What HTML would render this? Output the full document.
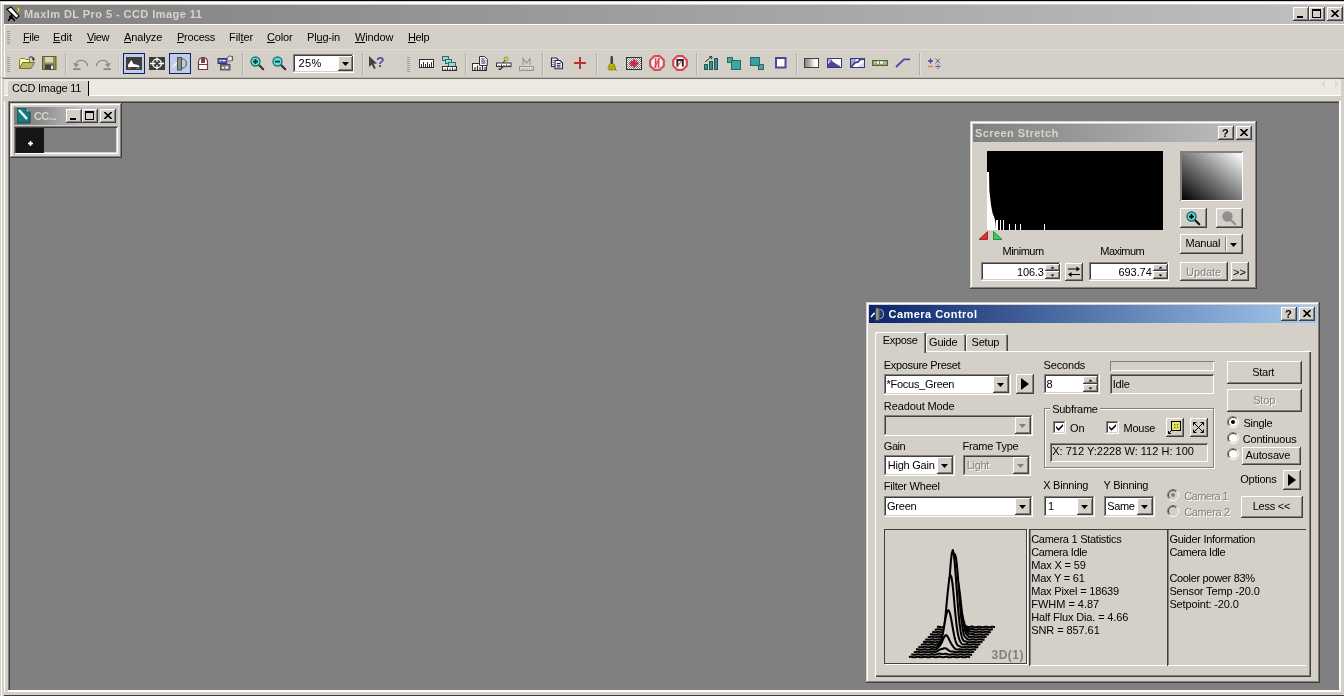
<!DOCTYPE html>
<html><head><meta charset="utf-8"><title>MaxIm DL Pro 5 - CCD Image 11</title>
<style>
html,body{margin:0;padding:0}
body{width:1344px;height:696px;position:relative;overflow:hidden;background:#d4d0c8;font-family:"Liberation Sans",sans-serif;font-size:11px;color:#000}
.a{position:absolute;box-sizing:border-box}
.t{position:absolute;white-space:nowrap}
.r{background:#d4d0c8;box-shadow:inset -1px -1px #404040,inset 1px 1px #fff,inset -2px -2px #808080,inset 2px 2px #d4d0c8}
.s{background:#fff;box-shadow:inset -1px -1px #fff,inset 1px 1px #808080,inset -2px -2px #d4d0c8,inset 2px 2px #404040}
.w{background:#d4d0c8;box-shadow:inset -1px -1px #404040,inset 1px 1px #d4d0c8,inset -2px -2px #808080,inset 2px 2px #fff}
.cb{background:#d4d0c8;box-shadow:inset -1px -1px #404040,inset 1px 1px #fff,inset -2px -2px #808080}
u{text-decoration:underline;text-underline-offset:1px}
#root{position:absolute;left:0;top:0;width:1344px;height:696px;will-change:transform}

</style></head>
<body>
<div id="root">
<div class="a " style="left:0px;top:0px;width:1344px;height:1px;background:#000"></div>
<div class="a " style="left:0px;top:1px;width:1344px;height:1px;background:#d4d0c8"></div>
<div class="a " style="left:0px;top:2px;width:1344px;height:2px;background:#fff"></div>
<div class="a " style="left:0px;top:4px;width:1344px;height:1px;background:#d4d0c8"></div>
<div class="a " style="left:0px;top:1px;width:1px;height:695px;background:#d4d0c8"></div>
<div class="a " style="left:1px;top:2px;width:1px;height:694px;background:#fff"></div>
<div class="a " style="left:2px;top:4px;width:2px;height:692px;background:#d4d0c8"></div>
<div class="a " style="left:4px;top:25px;width:1px;height:667px;background:#fff"></div>
<div class="a " style="left:4px;top:5px;width:1340px;height:19px;background:linear-gradient(90deg,#808080 0%,#c0c0c0 100%)"></div>
<svg class="a" style="left:5px;top:6px" width="18" height="17" viewBox="0 0 18 17">
<path d="M6.5 7 L6.5 13 M6.5 10.5 L3.2 15 M6.5 10.5 L9.6 15 M4 10.6 L7.5 10.6" stroke="#000" stroke-width="1.7" fill="none"/>
<path d="M2 3.3 L6 1 L14 10 L11.5 12.5 Z" fill="#fff" stroke="#000" stroke-width="1.1"/>
<path d="M11.6 1 L13.8 1.4 L14.8 3.6 L13.6 6.2 L11.8 5.8 L13 3.6 Z" fill="#e8e860" stroke="#909018" stroke-width=".8"/>
</svg>
<div id="t1" class="t" style="left:24px;top:9px;font-size:11px;line-height:11px;color:#d8d4cc;font-weight:bold;letter-spacing:0.439px;">MaxIm DL Pro 5 - CCD Image 11</div>
<div class="a cb" style="left:1293px;top:7px;width:16px;height:14px;"></div>
<div class="a " style="left:1297px;top:16px;width:6px;height:2px;background:#000"></div>
<div class="a cb" style="left:1309px;top:7px;width:16px;height:14px;"></div>
<div class="a " style="left:1312px;top:9px;width:9px;height:9px;border:1px solid #000;border-top:2px solid #000"></div>
<div class="a cb" style="left:1327px;top:7px;width:16px;height:14px;"></div>
<svg class="a" style="left:1331px;top:10px" width="8" height="7" viewBox="0 0 8 7"><path d="M0 0 L7 7 M7 0 L0 7" stroke="#000" stroke-width="1.6" transform="translate(.5,0)"/></svg>
<div class="a " style="left:4px;top:24px;width:1340px;height:1px;background:#fff"></div>
<div class="a " style="left:7px;top:31px;width:3px;height:1px;background:#a19d93"></div>
<div class="a " style="left:7px;top:33px;width:3px;height:1px;background:#a19d93"></div>
<div class="a " style="left:7px;top:35px;width:3px;height:1px;background:#a19d93"></div>
<div class="a " style="left:7px;top:37px;width:3px;height:1px;background:#a19d93"></div>
<div class="a " style="left:7px;top:39px;width:3px;height:1px;background:#a19d93"></div>
<div class="a " style="left:7px;top:41px;width:3px;height:1px;background:#a19d93"></div>
<div class="a " style="left:7px;top:43px;width:3px;height:1px;background:#a19d93"></div>
<div id="t2" class="t" style="left:23px;top:32px;font-size:11px;line-height:11px;letter-spacing:-0.388px;"><u>F</u>ile</div>
<div id="t3" class="t" style="left:53px;top:32px;font-size:11px;line-height:11px;letter-spacing:0.058px;"><u>E</u>dit</div>
<div id="t4" class="t" style="left:87px;top:32px;font-size:11px;line-height:11px;letter-spacing:-0.364px;"><u>V</u>iew</div>
<div id="t5" class="t" style="left:124px;top:32px;font-size:11px;line-height:11px;letter-spacing:-0.134px;"><u>A</u>nalyze</div>
<div id="t6" class="t" style="left:177px;top:32px;font-size:11px;line-height:11px;letter-spacing:-0.236px;"><u>P</u>rocess</div>
<div id="t7" class="t" style="left:229px;top:32px;font-size:11px;line-height:11px;letter-spacing:-0.042px;">Fil<u>t</u>er</div>
<div id="t8" class="t" style="left:267px;top:32px;font-size:11px;line-height:11px;letter-spacing:-0.159px;"><u>C</u>olor</div>
<div id="t9" class="t" style="left:307px;top:32px;font-size:11px;line-height:11px;letter-spacing:-0.179px;">Pl<u>u</u>g-in</div>
<div id="t10" class="t" style="left:355px;top:32px;font-size:11px;line-height:11px;letter-spacing:-0.157px;"><u>W</u>indow</div>
<div id="t11" class="t" style="left:408px;top:32px;font-size:11px;line-height:11px;letter-spacing:-0.360px;"><u>H</u>elp</div>
<div class="a " style="left:4px;top:49px;width:1340px;height:1px;background:#dedbd4"></div>
<div class="a " style="left:7px;top:57px;width:3px;height:1px;background:#a19d93"></div>
<div class="a " style="left:7px;top:59px;width:3px;height:1px;background:#a19d93"></div>
<div class="a " style="left:7px;top:61px;width:3px;height:1px;background:#a19d93"></div>
<div class="a " style="left:7px;top:63px;width:3px;height:1px;background:#a19d93"></div>
<div class="a " style="left:7px;top:65px;width:3px;height:1px;background:#a19d93"></div>
<div class="a " style="left:7px;top:67px;width:3px;height:1px;background:#a19d93"></div>
<div class="a " style="left:7px;top:69px;width:3px;height:1px;background:#a19d93"></div>
<div class="a " style="left:7px;top:71px;width:3px;height:1px;background:#a19d93"></div>
<div class="a " style="left:407px;top:57px;width:3px;height:1px;background:#a19d93"></div>
<div class="a " style="left:407px;top:59px;width:3px;height:1px;background:#a19d93"></div>
<div class="a " style="left:407px;top:61px;width:3px;height:1px;background:#a19d93"></div>
<div class="a " style="left:407px;top:63px;width:3px;height:1px;background:#a19d93"></div>
<div class="a " style="left:407px;top:65px;width:3px;height:1px;background:#a19d93"></div>
<div class="a " style="left:407px;top:67px;width:3px;height:1px;background:#a19d93"></div>
<div class="a " style="left:407px;top:69px;width:3px;height:1px;background:#a19d93"></div>
<div class="a " style="left:407px;top:71px;width:3px;height:1px;background:#a19d93"></div>
<div class="a " style="left:65px;top:53px;width:1px;height:22px;background:#b4b0a7"></div>
<div class="a " style="left:66px;top:53px;width:1px;height:22px;background:#e2dfd9"></div>
<div class="a " style="left:242px;top:53px;width:1px;height:22px;background:#b4b0a7"></div>
<div class="a " style="left:243px;top:53px;width:1px;height:22px;background:#e2dfd9"></div>
<div class="a " style="left:362px;top:53px;width:1px;height:22px;background:#b4b0a7"></div>
<div class="a " style="left:363px;top:53px;width:1px;height:22px;background:#e2dfd9"></div>
<div class="a " style="left:465px;top:53px;width:1px;height:22px;background:#b4b0a7"></div>
<div class="a " style="left:466px;top:53px;width:1px;height:22px;background:#e2dfd9"></div>
<div class="a " style="left:542px;top:53px;width:1px;height:22px;background:#b4b0a7"></div>
<div class="a " style="left:543px;top:53px;width:1px;height:22px;background:#e2dfd9"></div>
<div class="a " style="left:596px;top:53px;width:1px;height:22px;background:#b4b0a7"></div>
<div class="a " style="left:597px;top:53px;width:1px;height:22px;background:#e2dfd9"></div>
<div class="a " style="left:696px;top:53px;width:1px;height:22px;background:#b4b0a7"></div>
<div class="a " style="left:697px;top:53px;width:1px;height:22px;background:#e2dfd9"></div>
<div class="a " style="left:796px;top:53px;width:1px;height:22px;background:#b4b0a7"></div>
<div class="a " style="left:797px;top:53px;width:1px;height:22px;background:#e2dfd9"></div>
<div class="a " style="left:919px;top:53px;width:1px;height:22px;background:#b4b0a7"></div>
<div class="a " style="left:920px;top:53px;width:1px;height:22px;background:#e2dfd9"></div>
<div class="a " style="left:118px;top:53px;width:1px;height:22px;background:#cbc7be"></div>
<div class="a " style="left:119px;top:53px;width:1px;height:22px;background:#dedbd4"></div>
<div class="a " style="left:123px;top:53px;width:22px;height:21px;background:#c2cce6;border:1px solid #0a246a"></div>
<div class="a " style="left:169px;top:53px;width:22px;height:21px;background:#c2cce6;border:1px solid #0a246a"></div>
<div class="a s" style="left:293px;top:54px;width:61px;height:19px;"></div>
<div id="t12" class="t" style="left:298.5px;top:58px;font-size:11px;line-height:11px;color:#000;letter-spacing:0.323px;">25%</div>
<div class="a cb" style="left:338px;top:56px;width:15px;height:15px;"></div>
<svg class="a" style="left:342px;top:62px" width="7" height="4" viewBox="0 0 7 4"><path d="M0 0 L7 0 L3.5 4 Z" fill="#000"/></svg>
<div class="a " style="left:0px;top:77px;width:1344px;height:1px;background:#bdb9b0"></div>
<div class="a " style="left:3px;top:78px;width:1341px;height:1px;background:#6e6b64"></div>
<div class="a " style="left:4px;top:79px;width:1340px;height:17px;background:#ece9e3"></div>
<div class="a " style="left:4px;top:95px;width:1340px;height:1px;background:#fff"></div>
<div class="a " style="left:8px;top:81px;width:80px;height:15px;background:#d4d0c8"></div>
<div class="a " style="left:88px;top:81px;width:1px;height:15px;background:#000"></div>
<div id="t13" class="t" style="left:12px;top:83px;font-size:11px;line-height:11px;color:#000;letter-spacing:-0.228px;">CCD Image 11</div>
<svg class="a" style="left:1320px;top:80px" width="20" height="10" viewBox="0 0 20 10"><path d="M1 4 L5 0 L5 8 Z M19 4 L15 0 L15 8 Z" fill="#dcd9d2"/></svg>
<div class="a " style="left:4px;top:96px;width:1340px;height:5px;background:#d4d0c8"></div>
<div class="a " style="left:8px;top:101px;width:1331px;height:589px;background:#808080;box-shadow:inset 1px 1px #808080,inset 2px 2px #404040"></div>
<div class="a " style="left:1339px;top:101px;width:2px;height:591px;background:#fff"></div>
<div class="a " style="left:1341px;top:79px;width:3px;height:617px;background:#d4d0c8"></div>
<div class="a " style="left:8px;top:690px;width:1333px;height:2px;background:#fff"></div>
<div class="a " style="left:4px;top:692px;width:1340px;height:3px;background:#d4d0c8"></div>
<div class="a " style="left:4px;top:695px;width:1340px;height:1px;background:#404040"></div>
<div class="a w" style="left:10px;top:103px;width:112px;height:55px;"></div>
<div class="a " style="left:14px;top:107px;width:104px;height:18px;background:linear-gradient(90deg,#808080 0%,#8c8c8c 25%,#c0c0c0 65%,#c0c0c0 100%)"></div>
<svg class="a" style="left:17px;top:108px" width="14" height="16" viewBox="0 0 14 16">
<path d="M0 0 L9 0 L13 4 L13 15 L0 15 Z" fill="#1a7a80" stroke="#0a4a50" stroke-width="1"/>
<path d="M9 0 L9 4 L13 4" fill="#7fd0d0" stroke="#0a4a50" stroke-width=".8"/>
<path d="M2 2 L10 11" stroke="#e8ffff" stroke-width="2.4"/>
</svg>
<div id="t14" class="t" style="left:34px;top:111px;font-size:11px;line-height:11px;color:#d8d4cc;font-weight:bold;letter-spacing:-0.573px;">CC...</div>
<div class="a cb" style="left:66px;top:109px;width:16px;height:14px;"></div>
<div class="a " style="left:70px;top:118px;width:6px;height:2px;background:#000"></div>
<div class="a cb" style="left:82px;top:109px;width:16px;height:14px;"></div>
<div class="a " style="left:85px;top:111px;width:9px;height:9px;border:1px solid #000;border-top:2px solid #000"></div>
<div class="a cb" style="left:100px;top:109px;width:16px;height:14px;"></div>
<svg class="a" style="left:104px;top:112px" width="8" height="7" viewBox="0 0 8 7"><path d="M0 0 L7 7 M7 0 L0 7" stroke="#000" stroke-width="1.6" transform="translate(.5,0)"/></svg>
<div class="a " style="left:14px;top:126px;width:104px;height:28px;background:#808080;box-shadow:inset 1px 1px #808080,inset -1px -1px #fff,inset 2px 2px #404040,inset -2px -2px #d4d0c8"></div>
<div class="a " style="left:16px;top:128px;width:28px;height:25px;background:#161616"></div>
<svg class="a" style="left:28px;top:141px" width="5" height="5" viewBox="0 0 5 5"><path d="M2.5 0 L2.5 5 M0 2.5 L5 2.5" stroke="#fff" stroke-width="1.4"/><rect x="1.2" y="1.2" width="2.6" height="2.6" fill="#fff"/></svg>
<svg class="a" style="left:19px;top:55px" width="17" height="15" viewBox="0 0 17 15">
<path d="M10 3.5 C11 1,14 1,14.5 4" fill="none" stroke="#303030" stroke-width="1.1"/>
<path d="M12.6 3.2 L16 3.4 L14.6 6.4 Z" fill="#303030"/>
<path d="M0.5 13.5 L0.5 4.5 L1.5 3.5 L5.5 3.5 L6.5 4.5 L10.5 4.5 L10.5 7.5" fill="#ffffa0" stroke="#808040" stroke-width="1"/>
<path d="M0.5 13.5 L3.5 7.5 L15.5 7.5 L12 13.5 Z" fill="#b8b860" stroke="#707030" stroke-width="1"/>
</svg>
<svg class="a" style="left:42px;top:56px" width="15" height="14" viewBox="0 0 15 14">
<rect x=".5" y=".5" width="13.5" height="13" fill="#909048" stroke="#606028" stroke-width="1"/>
<rect x="3" y="1" width="8" height="5.5" fill="#d8d4c0"/>
<rect x="3" y="8.5" width="8.5" height="5" fill="#404040"/>
<rect x="9" y="9.5" width="2" height="3.5" fill="#e8e8d0"/>
</svg>
<svg class="a" style="left:72px;top:57px" width="17" height="14" viewBox="0 0 17 14">
<path d="M3.5 8.5 C3.5 1.5,15.5 1.5,15.5 9.5" fill="none" stroke="#8c8a84" stroke-width="1.2"/>
<path d="M1 6 L4 10.5 L7 7 Z" fill="#8c8a84"/>
<rect x="1" y="11.2" width="7.5" height="1.8" fill="#8c8a84"/>
</svg>
<svg class="a" style="left:95px;top:57px" width="17" height="14" viewBox="0 0 17 14">
<path d="M1.5 9.5 C1.5 1.5,13.5 1.5,13.5 8.5" fill="none" stroke="#8c8a84" stroke-width="1.2"/>
<path d="M16 6 L13 10.5 L10 7 Z" fill="#8c8a84"/>
<rect x="8.5" y="11.2" width="7.5" height="1.8" fill="#8c8a84"/>
</svg>
<svg class="a" style="left:126px;top:57px" width="16" height="13" viewBox="0 0 16 13">
<rect width="16" height="13" fill="#3c3c3c"/>
<path d="M2 10 L2 8 L4 5 L5.2 3 L6.5 5 L7.5 7 L10 7.6 L12 8 L13.5 9 L13.5 10 Z" fill="#fff"/>
<rect x="2" y="10.5" width="3" height="1.2" fill="#e04040"/>
<rect x="10.5" y="10.5" width="3" height="1.2" fill="#40c040"/>
</svg>
<svg class="a" style="left:149px;top:57px" width="16" height="13" viewBox="0 0 16 13">
<rect width="16" height="13" fill="#3c3c3c"/>
<circle cx="8" cy="6.5" r="4.3" fill="none" stroke="#fff" stroke-width="1.3"/>
<path d="M8 0.5 L8 5 M8 8 L8 12.5 M1 6.5 L6.5 6.5 M9.5 6.5 L15 6.5" stroke="#fff" stroke-width="1.3"/>
</svg>
<svg class="a" style="left:172px;top:56px" width="16" height="15" viewBox="0 0 16 15">
<path d="M1 11 L4 7.5 L6 7.5" fill="none" stroke="#f4f4f4" stroke-width="1.4"/>
<path d="M9 3 L11 3 C15.5 3,15.5 12,11 12 L9 12 Z" fill="#b4d4d0" stroke="#2c5858" stroke-width="1"/>
<rect x="5.5" y="1.5" width="4" height="12.5" fill="#8c8c8c" stroke="#505050" stroke-width="1"/>
</svg>
<svg class="a" style="left:197px;top:56px" width="12" height="15" viewBox="0 0 12 15">
<path d="M1.5 13.5 L1.5 6 C1.5 0,10.5 0,10.5 6 L10.5 13.5 Z" fill="#fff" stroke="#703838" stroke-width="1.2"/>
<path d="M4 7 L4 2.2 C5 1.2,7 1.2,8 2.2 L8 7 Z" fill="#804040"/>
<path d="M1.5 8.5 L10.5 8.5" stroke="#703838" stroke-width="1"/>
</svg>
<svg class="a" style="left:217px;top:55px" width="18" height="16" viewBox="0 0 18 16">
<rect x="1" y="3.5" width="9" height="5" fill="#5858a8" stroke="#38386c" stroke-width="1"/>
<rect x="2.5" y="5" width="2" height="1.2" fill="#fff"/><rect x="5.5" y="5" width="3" height="1.2" fill="#fff"/>
<rect x="3.5" y="9.5" width="9.5" height="5.5" fill="#888088" stroke="#585058" stroke-width="1"/>
<rect x="5" y="12" width="2" height="1.4" fill="#fff"/><rect x="8.5" y="11.5" width="2.5" height="2" fill="#fff"/>
<circle cx="13" cy="3.5" r="2.6" fill="#e8e8e8" stroke="#606068" stroke-width="1"/>
<path d="M9 9 L12 5.5 M15.5 1 L15.5 6" stroke="#606068" stroke-width="1.1"/>
<rect x="10" y="5" width="3" height="3" fill="#a8a8c8" opacity=".8"/>
</svg>
<svg class="a" style="left:250px;top:56px" width="15" height="15" viewBox="0 0 15 15"><path d="M8.5 8.5 L13.2 13.2" stroke="#3c3030" stroke-width="2.2" stroke-linecap="round"/><circle cx="5.5" cy="5.5" r="4.5" fill="#5fe0e0" stroke="#207878" stroke-width="1.4"/><rect x="3" y="4.7" width="5" height="1.8" fill="#103838"/><rect x="4.6" y="3" width="1.8" height="5" fill="#103838"/></svg>
<svg class="a" style="left:272px;top:56px" width="15" height="15" viewBox="0 0 15 15"><path d="M8.5 8.5 L13.2 13.2" stroke="#3c3030" stroke-width="2.2" stroke-linecap="round"/><circle cx="5.5" cy="5.5" r="4.5" fill="#5fe0e0" stroke="#207878" stroke-width="1.4"/><rect x="3" y="4.7" width="5" height="1.8" fill="#103838"/></svg>
<svg class="a" style="left:368px;top:55px" width="18" height="16" viewBox="0 0 18 16">
<path d="M1 1 L1 12 L3.8 9.4 L6 14 L7.8 13.2 L5.6 8.8 L9 8.6 Z" fill="#404040"/>
<text x="8" y="11.5" font-family="Liberation Sans, sans-serif" font-weight="bold" font-size="14" fill="#5a4aa0">?</text>
</svg>
<svg class="a" style="left:419px;top:59px" width="15" height="9" viewBox="0 0 15 9"><rect x=".5" y=".5" width="14" height="8" fill="#fff" stroke="#303030" stroke-width="1"/><rect x="2.0" y="5" width="1" height="3" fill="#303030"/><rect x="4.0" y="3" width="1" height="5" fill="#303030"/><rect x="6.0" y="5" width="1" height="3" fill="#303030"/><rect x="8.0" y="3" width="1" height="5" fill="#303030"/><rect x="10.0" y="5" width="1" height="3" fill="#303030"/><rect x="12.0" y="3" width="1" height="5" fill="#303030"/></svg>
<svg class="a" style="left:442px;top:56px" width="16" height="15" viewBox="0 0 16 15">
<rect x=".5" y=".5" width="6" height="4" fill="#9fd8d0" stroke="#287068" stroke-width="1"/>
<rect x="3.5" y="3.5" width="6" height="4" fill="#9fd8d0" stroke="#287068" stroke-width="1"/>
<rect x="6.5" y="6.5" width="7" height="4" fill="#9fd8d0" stroke="#287068" stroke-width="1"/>
<rect x=".5" y="10.5" width="14" height="4" fill="#fff" stroke="#303030" stroke-width="1"/>
<path d="M3 12.5 L3 14 M5.5 11.5 L5.5 14 M8 12.5 L8 14 M10.5 11.5 L10.5 14 M13 12.5 L13 14" stroke="#303030" stroke-width="1"/>
</svg>
<svg class="a" style="left:472px;top:56px" width="16" height="15" viewBox="0 0 16 15">
<rect x=".5" y="7.5" width="14" height="7" fill="#fff" stroke="#303030" stroke-width="1"/>
<path d="M3 11 L3 14 M5.5 9.5 L5.5 14 M8 11 L8 14 M10.5 9.5 L10.5 14 M13 11 L13 14" stroke="#303030" stroke-width="1.2"/>
<path d="M7.5 .5 L12.5 .5 L15.3 3.2 L15.3 9.5 L7.5 9.5 Z" fill="#f4f4ff" stroke="#303048" stroke-width="1"/>
<path d="M9.3 3 L12.5 3 M9.3 5 L13.5 5 M9.3 7 L13.5 7" stroke="#303048" stroke-width="1"/>
</svg>
<svg class="a" style="left:496px;top:56px" width="16" height="15" viewBox="0 0 16 15">
<circle cx="10" cy="3" r="1.8" fill="none" stroke="#a8a020" stroke-width="1.2"/>
<path d="M9 4.5 L6 8" stroke="#404040" stroke-width="1.1"/>
<rect x=".5" y="7" width="14.5" height="3.6" fill="#fff" stroke="#303030" stroke-width="1"/>
<path d="M3 9 L3 10.5 M5.5 8.5 L5.5 10.5 M8 9 L8 10.5 M10.5 8.5 L10.5 10.5 M13 9 L13 10.5" stroke="#303030" stroke-width="1"/>
<path d="M7 10.8 L4 13.5 L2.5 12.8" fill="none" stroke="#303030" stroke-width="1.3"/>
</svg>
<svg class="a" style="left:519px;top:57px" width="16" height="15" viewBox="0 0 16 15">
<path d="M4 8 L4 1.5 L7.5 6 L11 1.5 L11 8" fill="none" stroke="#9a968e" stroke-width="1.1"/>
<rect x=".5" y="9.5" width="14" height="4" fill="#e0ddd6" stroke="#9a968e" stroke-width="1"/>
<path d="M3 11.5 L3 13 M5.5 11.5 L5.5 13 M8 11.5 L8 13 M10.5 11.5 L10.5 13 M13 11.5 L13 13" stroke="#9a968e" stroke-width="1"/>
</svg>
<svg class="a" style="left:550px;top:57px" width="15" height="13" viewBox="0 0 15 13">
<path d="M1.5 1 L6.5 1 L8 2.5 L8 9.5 L1.5 9.5 Z" fill="#f0f0ff" stroke="#282848" stroke-width="1.1"/>
<path d="M5 3.5 L10 3.5 L12.5 6 L12.5 11.8 L5 11.8 Z" fill="#f0f0ff" stroke="#282848" stroke-width="1.1"/>
<path d="M6.8 6.5 L10.5 6.5 M6.8 8.3 L10.5 8.3 M6.8 10 L10.5 10" stroke="#282848" stroke-width="1"/>
<path d="M2.6 3.5 L3.6 3.5 M2.6 5.5 L3.6 5.5 M2.6 7.5 L3.6 7.5" stroke="#282848" stroke-width="1"/>
</svg>
<svg class="a" style="left:574px;top:57px" width="12" height="12" viewBox="0 0 12 12"><path d="M6 0 L6 12 M0 6 L12 6" stroke="#b83030" stroke-width="2"/></svg>
<svg class="a" style="left:606px;top:56px" width="12" height="15" viewBox="0 0 12 15">
<path d="M5 0 L6.5 0 L7 1.5 L7 8 L4.5 8 L4.5 1.5 Z" fill="#404040"/>
<path d="M3.5 8 L8 8 L9.5 12 L8.5 14 L3 14 L2 12 Z" fill="#e8e020" stroke="#808000" stroke-width=".8"/>
<path d="M4 9 L4 14 M6 9 L6 14 M8 9 L8 13" stroke="#606000" stroke-width=".8"/>
<path d="M9 13 L10.5 14.5" stroke="#404040" stroke-width="1"/>
</svg>
<svg class="a" style="left:626px;top:57px" width="16" height="13" viewBox="0 0 16 13">
<defs><pattern id="dots" width="2" height="2" patternUnits="userSpaceOnUse"><rect width="1" height="1" fill="#585858"/><rect x="1" y="1" width="1" height="1" fill="#585858"/></pattern></defs>
<rect x=".5" y=".5" width="15" height="12" fill="#fff" stroke="#303030" stroke-width="1"/>
<rect x="1" y="1" width="14" height="11" fill="url(#dots)" opacity=".75"/>
<path d="M8 2.5 L8 10.5 M3.5 6.5 L12.5 6.5" stroke="#c03048" stroke-width="2.4"/>
<path d="M5 3.8 L11 9.2 M11 3.8 L5 9.2" stroke="#c03048" stroke-width="1.2"/>
</svg>
<svg class="a" style="left:649px;top:55px" width="16" height="16" viewBox="0 0 16 16"><path d="M5.2 1.2 L10.8 1.2 L14.8 5.2 L14.8 10.8 L10.8 14.8 L5.2 14.8 L1.2 10.8 L1.2 5.2 Z" fill="#fff" stroke="#d84858" stroke-width="2.2" stroke-linejoin="round"/><path d="M6.6 3 L6.6 13 M9.6 3 L9.6 13" stroke="#d84858" stroke-width="1.7"/><path d="M10.5 3.5 L5.5 12.5" stroke="#d84858" stroke-width="1.3"/></svg>
<svg class="a" style="left:672px;top:55px" width="16" height="16" viewBox="0 0 16 16"><path d="M5.2 1.2 L10.8 1.2 L14.8 5.2 L14.8 10.8 L10.8 14.8 L5.2 14.8 L1.2 10.8 L1.2 5.2 Z" fill="#fff" stroke="#d84858" stroke-width="2.2" stroke-linejoin="round"/><path d="M5.4 11.6 L5.4 5 L10.8 5 L10.8 11.6" fill="none" stroke="#302828" stroke-width="2"/><path d="M5 12 L9.5 6" stroke="#d84858" stroke-width="1.1"/></svg>
<svg class="a" style="left:704px;top:56px" width="15" height="14" viewBox="0 0 15 14">
<rect x=".5" y="8.5" width="3" height="5" fill="#3a9090" stroke="#205858" stroke-width="1"/>
<rect x="5.5" y="5.5" width="3" height="8" fill="#3a9090" stroke="#205858" stroke-width="1"/>
<rect x="10.5" y="2.5" width="3" height="11" fill="#3a9090" stroke="#205858" stroke-width="1"/>
<path d="M1 6 L7.5 .8 M5 .8 L8 .6 L7.6 3.2" fill="none" stroke="#303030" stroke-width="1"/>
</svg>
<svg class="a" style="left:727px;top:57px" width="15" height="13" viewBox="0 0 15 13">
<rect x=".5" y=".5" width="5" height="5" fill="#4aa8a0" stroke="#286860" stroke-width="1"/>
<rect x="4.5" y="3.5" width="9" height="9" fill="#38a8a8" stroke="#286860" stroke-width="1"/>
</svg>
<svg class="a" style="left:750px;top:57px" width="15" height="13" viewBox="0 0 15 13">
<rect x="8.5" y="7.5" width="5" height="5" fill="#5a9c98" stroke="#286860" stroke-width="1"/>
<rect x=".5" y=".5" width="9" height="8" fill="#38a0a0" stroke="#286860" stroke-width="1"/>
</svg>
<svg class="a" style="left:775px;top:57px" width="12" height="12" viewBox="0 0 12 12"><rect x="1" y="1" width="9.5" height="9.5" fill="#fff" stroke="#484898" stroke-width="2"/></svg>
<svg class="a" style="left:804px;top:58px" width="15" height="10" viewBox="0 0 15 10">
<defs><linearGradient id="gA" x1="0" x2="1"><stop offset="0" stop-color="#808080"/><stop offset=".35" stop-color="#b0b0b0"/><stop offset=".7" stop-color="#f4f4f4"/><stop offset="1" stop-color="#fff"/></linearGradient></defs>
<rect x=".5" y=".5" width="14" height="9" fill="url(#gA)" stroke="#404040" stroke-width="1"/>
</svg>
<svg class="a" style="left:827px;top:58px" width="15" height="10" viewBox="0 0 15 10">
<rect x=".5" y=".5" width="14" height="9" fill="#fff" stroke="#383878" stroke-width="1"/>
<path d="M1 9 L1 6 L3 4 L4.5 1.5 L6 4 L8 5 L10 6.5 L13 8 L13 9 Z" fill="#484898"/>
<rect x="1" y="1" width="3" height="3" fill="#a8a8c8"/>
</svg>
<svg class="a" style="left:850px;top:58px" width="15" height="10" viewBox="0 0 15 10">
<rect x=".5" y=".5" width="14" height="9" fill="#fff" stroke="#383878" stroke-width="1"/>
<path d="M1 1 L7 1 L1 7 Z" fill="#a8a8c8"/>
<path d="M1 9 L5 4.5 L8 4 L10 1.5 L14 1" fill="none" stroke="#484898" stroke-width="2"/>
<path d="M7 9 L14 9 L14 4 Z" fill="#d8d8e8"/>
</svg>
<svg class="a" style="left:872px;top:60px" width="16" height="6" viewBox="0 0 16 6">
<rect x=".5" y=".5" width="15" height="5" fill="#88a870" stroke="#506838" stroke-width="1"/>
<rect x="5" y="1.5" width="6" height="2.2" fill="#fff"/>
<rect x="7" y="1.5" width="1" height="2.2" fill="#506838"/>
<rect x="2" y="2" width="2" height="1.2" fill="#d0e0c0"/><rect x="12" y="2" width="2" height="1.2" fill="#d0e0c0"/>
</svg>
<svg class="a" style="left:895px;top:58px" width="16" height="10" viewBox="0 0 16 10"><path d="M1 9 L9 1.4 L15 1.4" fill="none" stroke="#4848a8" stroke-width="1.8"/></svg>
<svg class="a" style="left:927px;top:57px" width="15" height="13" viewBox="0 0 15 13">
<path d="M1 4 L6 4 M3.5 1.5 L3.5 6.5" stroke="#4040b0" stroke-width="1.3"/>
<path d="M8.5 1.5 L13 6.5 M13 1.5 L8.5 6.5" stroke="#606068" stroke-width="1"/>
<path d="M1 9.5 L6 9.5" stroke="#e08050" stroke-width="1.4"/>
<path d="M8.5 9.5 L13.5 9.5" stroke="#606090" stroke-width="1.2"/>
<rect x="10.4" y="7.3" width="1.2" height="1.2" fill="#606090"/><rect x="10.4" y="10.8" width="1.2" height="1.2" fill="#606090"/>
</svg>
<div class="a w" style="left:970px;top:121px;width:287px;height:168px;"></div>
<div class="a " style="left:973px;top:124px;width:281px;height:18px;background:linear-gradient(90deg,#808080 0%,#c0c0c0 100%)"></div>
<div id="t15" class="t" style="left:975px;top:128px;font-size:11px;line-height:11px;color:#d8d4cc;font-weight:bold;letter-spacing:0.425px;">Screen Stretch</div>
<div class="a cb" style="left:1218px;top:126px;width:16px;height:14px;"></div>
<div id="t16" class="t" style="left:1222px;top:128px;font-size:11px;line-height:11px;color:#000;font-weight:bold;">?</div>
<div class="a cb" style="left:1236px;top:126px;width:16px;height:14px;"></div>
<svg class="a" style="left:1240px;top:129px" width="8" height="7" viewBox="0 0 8 7"><path d="M0 0 L7 7 M7 0 L0 7" stroke="#000" stroke-width="1.6" transform="translate(.5,0)"/></svg>
<div class="a " style="left:987px;top:151px;width:176px;height:79px;background:#000"></div>
<svg class="a" style="left:987px;top:151px" width="176" height="79" viewBox="0 0 176 79"><path d="M0 79 L0 21 L2 21 L2.4 40 L4 54 L5.5 62 L7.5 67 L8.5 72 L9 79 Z" fill="#fff"/><rect x="9" y="69" width="2" height="10" fill="#fff"/><rect x="13" y="69" width="1" height="10" fill="#fff"/><rect x="16" y="69" width="1" height="10" fill="#fff"/><rect x="22" y="73" width="1" height="6" fill="#fff"/><rect x="28" y="73" width="1" height="6" fill="#fff"/><rect x="33" y="73" width="1" height="6" fill="#fff"/><rect x="57" y="73" width="1" height="6" fill="#fff"/></svg>
<svg class="a" style="left:978px;top:231px" width="26" height="10" viewBox="0 0 26 10"><path d="M9.5 0.5 L9.5 8.5 L1 8.5 Z" fill="#e03030" stroke="#802020" stroke-width=".8"/><path d="M15.5 0.5 L15.5 8.5 L24 8.5 Z" fill="#30d050" stroke="#207030" stroke-width=".8"/></svg>
<div class="a " style="left:1180px;top:151px;width:63px;height:50px;background:#fff;box-shadow:inset 1px 1px #808080,inset -1px -1px #fff,inset 2px 2px #808080"></div>
<div class="a " style="left:1182px;top:153px;width:60px;height:47px;background:linear-gradient(to top right,#000 0%,#7c7c7c 50%,#fff 100%)"></div>
<div class="a r" style="left:1180px;top:208px;width:27px;height:20px;"></div>
<svg class="a" style="left:1186px;top:211px" width="15" height="15" viewBox="0 0 15 15"><path d="M8.5 8.5 L13.2 13.2" stroke="#101010" stroke-width="2.2" stroke-linecap="round"/><circle cx="5.5" cy="5.5" r="4.5" fill="#60e0e0" stroke="#186868" stroke-width="1.4"/><rect x="3" y="4.7" width="5" height="1.8" fill="#000"/><rect x="4.6" y="3" width="1.8" height="5" fill="#000"/></svg>
<div class="a r" style="left:1216px;top:208px;width:27px;height:20px;"></div>
<svg class="a" style="left:1222px;top:211px" width="15" height="15" viewBox="0 0 15 15"><path d="M8.5 8.5 L13.2 13.2" stroke="#909090" stroke-width="2.2" stroke-linecap="round"/><circle cx="5.5" cy="5.5" r="4.5" fill="#909090" stroke="#909090" stroke-width="1.4"/><rect x="3" y="4.7" width="5" height="1.8" fill="#909090"/></svg>
<div class="a r" style="left:1180px;top:234px;width:63px;height:20px;"></div>
<div id="t17" class="t" style="left:1185.5px;top:238px;font-size:11px;line-height:11px;color:#000;letter-spacing:-0.230px;">Manual</div>
<div class="a " style="left:1225px;top:237px;width:1px;height:14px;background:#808080"></div>
<div class="a " style="left:1226px;top:237px;width:1px;height:14px;background:#fff"></div>
<svg class="a" style="left:1230px;top:243px" width="7" height="4" viewBox="0 0 7 4"><path d="M0 0 L7 0 L3.5 4 Z" fill="#000"/></svg>
<div id="t18" class="t" style="left:1002.5px;top:246px;font-size:11px;line-height:11px;color:#000;letter-spacing:-0.504px;">Minimum</div>
<div id="t19" class="t" style="left:1100.3px;top:246px;font-size:11px;line-height:11px;color:#000;letter-spacing:-0.539px;">Maximum</div>
<div class="a s" style="left:981px;top:262px;width:80px;height:19px;"></div>
<div id="t20" class="t" style="left:1017px;top:267px;font-size:11px;line-height:11px;color:#000;letter-spacing:-0.166px;">106.3</div>
<div class="a cb" style="left:1045px;top:264px;width:15px;height:7px;"></div>
<div class="a cb" style="left:1045px;top:271px;width:15px;height:8px;"></div>
<svg class="a" style="left:1050px;top:266px" width="5" height="3" viewBox="0 0 5 3"><path d="M0.5 2.6 L4.5 2.6 L2.5 0.4 Z" fill="#000"/></svg>
<svg class="a" style="left:1050px;top:274px" width="5" height="3" viewBox="0 0 5 3"><path d="M0.5 0.4 L4.5 0.4 L2.5 2.6 Z" fill="#000"/></svg>
<div class="a r" style="left:1065px;top:263px;width:18px;height:18px;"></div>
<svg class="a" style="left:1068px;top:266px" width="12" height="12" viewBox="0 0 12 12"><path d="M0 3 L10 3 M12 8.5 L2 8.5" fill="none" stroke="#000" stroke-width="1.1"/><path d="M8.5 .5 L12 3 L8.5 5.5 Z M3.5 6 L0 8.5 L3.5 11 Z" fill="#000"/></svg>
<div class="a s" style="left:1089px;top:262px;width:80px;height:19px;"></div>
<div id="t21" class="t" style="left:1118.5px;top:267px;font-size:11px;line-height:11px;color:#000;letter-spacing:-0.076px;">693.74</div>
<div class="a cb" style="left:1153px;top:264px;width:15px;height:7px;"></div>
<div class="a cb" style="left:1153px;top:271px;width:15px;height:8px;"></div>
<svg class="a" style="left:1158px;top:266px" width="5" height="3" viewBox="0 0 5 3"><path d="M0.5 2.6 L4.5 2.6 L2.5 0.4 Z" fill="#000"/></svg>
<svg class="a" style="left:1158px;top:274px" width="5" height="3" viewBox="0 0 5 3"><path d="M0.5 0.4 L4.5 0.4 L2.5 2.6 Z" fill="#000"/></svg>
<div class="a r" style="left:1180px;top:262px;width:48px;height:19px;"></div>
<div id="t22" class="t" style="left:1186px;top:267px;font-size:11px;line-height:11px;color:#808080;text-shadow:1px 1px 0 #fff;letter-spacing:-0.047px;">Update</div>
<div class="a r" style="left:1231px;top:262px;width:18px;height:19px;"></div>
<div id="t23" class="t" style="left:1233px;top:267px;font-size:11px;line-height:11px;color:#000;letter-spacing:0.170px;">&gt;&gt;</div>
<div class="a w" style="left:866px;top:302px;width:454px;height:381px;"></div>
<div class="a " style="left:869px;top:305px;width:448px;height:18px;background:linear-gradient(90deg,#0a246a 0%,#a6caf0 100%)"></div>
<svg class="a" style="left:870px;top:307px" width="15" height="15" viewBox="0 0 15 15">
<path d="M1 10 L4 6.5 L6 6.5" fill="none" stroke="#fff" stroke-width="1.4"/>
<path d="M9 2.5 L10.5 2.5 C14.5 2.5,14.5 11.5,10.5 11.5 L9 11.5 Z" fill="#26386c" stroke="#a8bcd8" stroke-width="1"/>
<rect x="5.5" y="1" width="3.6" height="12.5" fill="#909090" stroke="#404040" stroke-width="1"/>
</svg>
<div id="t24" class="t" style="left:888.5px;top:309px;font-size:11px;line-height:11px;color:#fff;font-weight:bold;letter-spacing:0.462px;">Camera Control</div>
<div class="a cb" style="left:1281px;top:307px;width:16px;height:14px;"></div>
<div id="t25" class="t" style="left:1285px;top:309px;font-size:11px;line-height:11px;color:#000;font-weight:bold;">?</div>
<div class="a cb" style="left:1299px;top:307px;width:16px;height:14px;"></div>
<svg class="a" style="left:1303px;top:310px" width="8" height="7" viewBox="0 0 8 7"><path d="M0 0 L7 7 M7 0 L0 7" stroke="#000" stroke-width="1.6" transform="translate(.5,0)"/></svg>
<div class="a " style="left:875px;top:351px;width:436px;height:326px;box-shadow:inset 1px 1px #fff,inset -1px -1px #404040,inset -2px -2px #808080"></div>
<div class="a " style="left:926px;top:334px;width:40px;height:17px;background:#d4d0c8;border-radius:2px 2px 0 0;box-shadow:inset 1px 1px #fff,inset -1px 0 #404040,inset -2px 0 #808080"></div>
<div class="a " style="left:966px;top:334px;width:42px;height:17px;background:#d4d0c8;border-radius:2px 2px 0 0;box-shadow:inset 1px 1px #fff,inset -1px 0 #404040,inset -2px 0 #808080"></div>
<div class="a " style="left:875px;top:332px;width:51px;height:21px;background:#d4d0c8;border-radius:2px 2px 0 0;box-shadow:inset 1px 1px #fff,inset -1px 0 #404040,inset -2px 0 #808080"></div>
<div class="a " style="left:876px;top:351px;width:48px;height:2px;background:#d4d0c8"></div>
<div id="t26" class="t" style="left:882.8px;top:335px;font-size:11px;line-height:11px;color:#000;letter-spacing:-0.334px;">Expose</div>
<div id="t27" class="t" style="left:929px;top:337px;font-size:11px;line-height:11px;color:#000;letter-spacing:-0.172px;">Guide</div>
<div id="t28" class="t" style="left:971.5px;top:337px;font-size:11px;line-height:11px;color:#000;letter-spacing:-0.210px;">Setup</div>
<div id="t29" class="t" style="left:883.8px;top:360px;font-size:11px;line-height:11px;color:#000;letter-spacing:-0.329px;">Exposure Preset</div>
<div class="a s" style="left:884px;top:374px;width:127px;height:21px;background:#fff"></div>
<div class="a cb" style="left:993px;top:376px;width:16px;height:17px;"></div>
<svg class="a" style="left:997px;top:383px" width="7" height="4" viewBox="0 0 7 4"><path d="M0 0 L7 0 L3.5 4 Z" fill="#000"/></svg>
<div id="t30" class="t" style="left:886.5px;top:379px;font-size:11px;line-height:11px;color:#000;letter-spacing:-0.270px;">*Focus_Green</div>
<div class="a r" style="left:1016px;top:374px;width:18px;height:20px;"></div>
<svg class="a" style="left:1021px;top:378px" width="8" height="12" viewBox="0 0 8 12"><path d="M0 0 L8 6 L0 12 Z" fill="#000"/></svg>
<div id="t31" class="t" style="left:883.8px;top:401px;font-size:11px;line-height:11px;color:#000;letter-spacing:-0.114px;">Readout Mode</div>
<div class="a s" style="left:884px;top:415px;width:149px;height:21px;background:#d4d0c8"></div>
<div class="a cb" style="left:1015px;top:417px;width:16px;height:17px;"></div>
<svg class="a" style="left:1019px;top:424px" width="7" height="4" viewBox="0 0 7 4"><path d="M0 0 L7 0 L3.5 4 Z" fill="#808080"/><path d="M1 1 L7.5 1 L4.2 4.6" fill="none" stroke="#fff" stroke-width="0"/></svg>
<div id="t32" class="t" style="left:883.8px;top:441px;font-size:11px;line-height:11px;color:#000;letter-spacing:-0.462px;">Gain</div>
<div id="t33" class="t" style="left:962.6px;top:441px;font-size:11px;line-height:11px;color:#000;letter-spacing:-0.270px;">Frame Type</div>
<div class="a s" style="left:884px;top:455px;width:71px;height:21px;background:#fff"></div>
<div class="a cb" style="left:937px;top:457px;width:16px;height:17px;"></div>
<svg class="a" style="left:941px;top:464px" width="7" height="4" viewBox="0 0 7 4"><path d="M0 0 L7 0 L3.5 4 Z" fill="#000"/></svg>
<div id="t34" class="t" style="left:887.7px;top:460px;font-size:11px;line-height:11px;color:#000;letter-spacing:-0.225px;">High Gain</div>
<div class="a s" style="left:963px;top:455px;width:68px;height:21px;background:#d4d0c8"></div>
<div class="a cb" style="left:1013px;top:457px;width:16px;height:17px;"></div>
<svg class="a" style="left:1017px;top:464px" width="7" height="4" viewBox="0 0 7 4"><path d="M0 0 L7 0 L3.5 4 Z" fill="#808080"/><path d="M1 1 L7.5 1 L4.2 4.6" fill="none" stroke="#fff" stroke-width="0"/></svg>
<div id="t35" class="t" style="left:966.7px;top:460px;font-size:11px;line-height:11px;color:#808080;text-shadow:1px 1px 0 #fff;letter-spacing:-0.312px;">Light</div>
<div id="t36" class="t" style="left:883.8px;top:481px;font-size:11px;line-height:11px;color:#000;letter-spacing:-0.241px;">Filter Wheel</div>
<div class="a s" style="left:884px;top:496px;width:149px;height:21px;background:#fff"></div>
<div class="a cb" style="left:1015px;top:498px;width:16px;height:17px;"></div>
<svg class="a" style="left:1019px;top:505px" width="7" height="4" viewBox="0 0 7 4"><path d="M0 0 L7 0 L3.5 4 Z" fill="#000"/></svg>
<div id="t37" class="t" style="left:887px;top:501px;font-size:11px;line-height:11px;color:#000;letter-spacing:-0.216px;">Green</div>
<div id="t38" class="t" style="left:1043.6px;top:360px;font-size:11px;line-height:11px;color:#000;letter-spacing:-0.173px;">Seconds</div>
<div class="a s" style="left:1044px;top:374px;width:56px;height:20px;"></div>
<div id="t39" class="t" style="left:1046.6px;top:379px;font-size:11px;line-height:11px;color:#000;">8</div>
<div class="a cb" style="left:1083px;top:376px;width:15px;height:8px;"></div>
<div class="a cb" style="left:1083px;top:384px;width:15px;height:8px;"></div>
<svg class="a" style="left:1088px;top:379px" width="5" height="3" viewBox="0 0 5 3"><path d="M0.5 2.6 L4.5 2.6 L2.5 0.4 Z" fill="#000"/></svg>
<svg class="a" style="left:1088px;top:387px" width="5" height="3" viewBox="0 0 5 3"><path d="M0.5 0.4 L4.5 0.4 L2.5 2.6 Z" fill="#000"/></svg>
<div class="a " style="left:1110px;top:361px;width:104px;height:10px;background:#d4d0c8;box-shadow:inset 1px 1px #808080,inset -1px -1px #fff"></div>
<div class="a " style="left:1110px;top:374px;width:104px;height:20px;background:#d4d0c8;box-shadow:inset 1px 1px #808080,inset -1px -1px #fff,inset 2px 2px #404040,inset -2px -2px #d4d0c8"></div>
<div id="t40" class="t" style="left:1112.7px;top:379px;font-size:11px;line-height:11px;color:#000;letter-spacing:-0.212px;">Idle</div>
<div class="a " style="left:1044px;top:408px;width:170px;height:60px;border:1px solid #808080;box-shadow:1px 1px #fff,inset 1px 1px #fff"></div>
<div class="a " style="left:1050px;top:404px;width:50px;height:10px;background:#d4d0c8"></div>
<div id="t41" class="t" style="left:1052.2px;top:404px;font-size:11px;line-height:11px;color:#000;letter-spacing:-0.275px;">Subframe</div>
<div class="a s" style="left:1053px;top:421px;width:13px;height:13px;"></div>
<svg class="a" style="left:1056px;top:424px" width="7" height="7" viewBox="0 0 7 7"><path d="M0 2 L0 4 L2.5 6.8 L7 2.2 L7 0 L2.5 4.6 Z" fill="#000"/></svg>
<div id="t42" class="t" style="left:1070px;top:423px;font-size:11px;line-height:11px;color:#000;letter-spacing:-0.044px;">On</div>
<div class="a s" style="left:1106px;top:421px;width:13px;height:13px;"></div>
<svg class="a" style="left:1109px;top:424px" width="7" height="7" viewBox="0 0 7 7"><path d="M0 2 L0 4 L2.5 6.8 L7 2.2 L7 0 L2.5 4.6 Z" fill="#000"/></svg>
<div id="t43" class="t" style="left:1123.6px;top:423px;font-size:11px;line-height:11px;color:#000;letter-spacing:-0.286px;">Mouse</div>
<div class="a r" style="left:1166px;top:418px;width:18px;height:19px;"></div>
<svg class="a" style="left:1168px;top:421px" width="14" height="14" viewBox="0 0 14 14"><rect x="3.5" y=".5" width="9" height="9" fill="#e8e860" stroke="#000" stroke-width="1"/><rect x="6" y="3" width="1.4" height="1.4" fill="#808000"/><rect x="8.8" y="3" width="1.4" height="1.4" fill="#808000"/><rect x="6" y="5.8" width="1.4" height="1.4" fill="#808000"/><rect x="8.8" y="5.8" width="1.4" height="1.4" fill="#808000"/><path d="M3.5 9.5 L.5 12.5 M.5 10 L.5 12.5 L3 12.5" fill="none" stroke="#000" stroke-width="1"/></svg>
<div class="a r" style="left:1190px;top:418px;width:18px;height:19px;"></div>
<svg class="a" style="left:1192px;top:421px" width="14" height="14" viewBox="0 0 14 14"><path d="M1.5 1.5 L11.5 11.5 M11.5 1.5 L1.5 11.5 M1.5 4.5 L1.5 1.5 L4.5 1.5 M8.5 1.5 L11.5 1.5 L11.5 4.5 M11.5 8.5 L11.5 11.5 L8.5 11.5 M4.5 11.5 L1.5 11.5 L1.5 8.5" fill="none" stroke="#000" stroke-width="1"/></svg>
<div class="a " style="left:1050px;top:443px;width:158px;height:19px;background:#d4d0c8;box-shadow:inset 1px 1px #808080,inset -1px -1px #fff,inset 2px 2px #404040,inset -2px -2px #d4d0c8"></div>
<div id="t44" class="t" style="left:1052.2px;top:446px;font-size:11px;line-height:11px;color:#000;letter-spacing:0.019px;">X: 712 Y:2228 W: 112 H: 100</div>
<div id="t45" class="t" style="left:1043.2px;top:480px;font-size:11px;line-height:11px;color:#000;letter-spacing:-0.233px;">X Binning</div>
<div id="t46" class="t" style="left:1103.5px;top:480px;font-size:11px;line-height:11px;color:#000;letter-spacing:-0.243px;">Y Binning</div>
<div class="a s" style="left:1044px;top:496px;width:51px;height:21px;background:#fff"></div>
<div class="a cb" style="left:1077px;top:498px;width:16px;height:17px;"></div>
<svg class="a" style="left:1081px;top:505px" width="7" height="4" viewBox="0 0 7 4"><path d="M0 0 L7 0 L3.5 4 Z" fill="#000"/></svg>
<div id="t47" class="t" style="left:1048px;top:501px;font-size:11px;line-height:11px;color:#000;">1</div>
<div class="a s" style="left:1104px;top:496px;width:51px;height:21px;background:#fff"></div>
<div class="a cb" style="left:1137px;top:498px;width:16px;height:17px;"></div>
<svg class="a" style="left:1141px;top:505px" width="7" height="4" viewBox="0 0 7 4"><path d="M0 0 L7 0 L3.5 4 Z" fill="#000"/></svg>
<div id="t48" class="t" style="left:1107.2px;top:501px;font-size:11px;line-height:11px;color:#000;letter-spacing:-0.337px;">Same</div>
<svg class="a" style="left:1167px;top:489px" width="12" height="12" viewBox="0 0 12 12"><circle cx="6" cy="6" r="5" fill="#d4d0c8"/><path d="M2.1 9.9 A5.5 5.5 0 0 1 9.9 2.1" fill="none" stroke="#808080" stroke-width="1"/><path d="M2.8 9.2 A4.5 4.5 0 0 1 9.2 2.8" fill="none" stroke="#404040" stroke-width="1"/><path d="M9.9 2.1 A5.5 5.5 0 0 1 2.1 9.9" fill="none" stroke="#fff" stroke-width="1"/><path d="M9.2 2.8 A4.5 4.5 0 0 1 2.8 9.2" fill="none" stroke="#d4d0c8" stroke-width="1"/><circle cx="6" cy="6" r="2" fill="#808080"/></svg>
<div id="t49" class="t" style="left:1184.2px;top:491px;font-size:11px;line-height:11px;color:#808080;text-shadow:1px 1px 0 #fff;letter-spacing:-0.537px;">Camera 1</div>
<svg class="a" style="left:1167px;top:505px" width="12" height="12" viewBox="0 0 12 12"><circle cx="6" cy="6" r="5" fill="#d4d0c8"/><path d="M2.1 9.9 A5.5 5.5 0 0 1 9.9 2.1" fill="none" stroke="#808080" stroke-width="1"/><path d="M2.8 9.2 A4.5 4.5 0 0 1 9.2 2.8" fill="none" stroke="#404040" stroke-width="1"/><path d="M9.9 2.1 A5.5 5.5 0 0 1 2.1 9.9" fill="none" stroke="#fff" stroke-width="1"/><path d="M9.2 2.8 A4.5 4.5 0 0 1 2.8 9.2" fill="none" stroke="#d4d0c8" stroke-width="1"/></svg>
<div id="t50" class="t" style="left:1184.2px;top:507px;font-size:11px;line-height:11px;color:#808080;text-shadow:1px 1px 0 #fff;letter-spacing:-0.350px;">Camera 2</div>
<div class="a r" style="left:1227px;top:361px;width:75px;height:23px;"></div>
<div id="t51" class="t" style="left:1252.2px;top:367px;font-size:11px;line-height:11px;color:#000;letter-spacing:-0.247px;">Start</div>
<div class="a r" style="left:1227px;top:389px;width:75px;height:23px;"></div>
<div id="t52" class="t" style="left:1253.2px;top:395px;font-size:11px;line-height:11px;color:#808080;text-shadow:1px 1px 0 #fff;letter-spacing:-0.160px;">Stop</div>
<svg class="a" style="left:1227px;top:416px" width="12" height="12" viewBox="0 0 12 12"><circle cx="6" cy="6" r="5" fill="#fff"/><path d="M2.1 9.9 A5.5 5.5 0 0 1 9.9 2.1" fill="none" stroke="#808080" stroke-width="1"/><path d="M2.8 9.2 A4.5 4.5 0 0 1 9.2 2.8" fill="none" stroke="#404040" stroke-width="1"/><path d="M9.9 2.1 A5.5 5.5 0 0 1 2.1 9.9" fill="none" stroke="#fff" stroke-width="1"/><path d="M9.2 2.8 A4.5 4.5 0 0 1 2.8 9.2" fill="none" stroke="#d4d0c8" stroke-width="1"/><circle cx="6" cy="6" r="2" fill="#000"/></svg>
<div id="t53" class="t" style="left:1243.6px;top:418px;font-size:11px;line-height:11px;color:#000;letter-spacing:-0.330px;">Single</div>
<svg class="a" style="left:1227px;top:432px" width="12" height="12" viewBox="0 0 12 12"><circle cx="6" cy="6" r="5" fill="#fff"/><path d="M2.1 9.9 A5.5 5.5 0 0 1 9.9 2.1" fill="none" stroke="#808080" stroke-width="1"/><path d="M2.8 9.2 A4.5 4.5 0 0 1 9.2 2.8" fill="none" stroke="#404040" stroke-width="1"/><path d="M9.9 2.1 A5.5 5.5 0 0 1 2.1 9.9" fill="none" stroke="#fff" stroke-width="1"/><path d="M9.2 2.8 A4.5 4.5 0 0 1 2.8 9.2" fill="none" stroke="#d4d0c8" stroke-width="1"/></svg>
<div id="t54" class="t" style="left:1242.7px;top:434px;font-size:11px;line-height:11px;color:#000;letter-spacing:-0.186px;">Continuous</div>
<svg class="a" style="left:1227px;top:448px" width="12" height="12" viewBox="0 0 12 12"><circle cx="6" cy="6" r="5" fill="#fff"/><path d="M2.1 9.9 A5.5 5.5 0 0 1 9.9 2.1" fill="none" stroke="#808080" stroke-width="1"/><path d="M2.8 9.2 A4.5 4.5 0 0 1 9.2 2.8" fill="none" stroke="#404040" stroke-width="1"/><path d="M9.9 2.1 A5.5 5.5 0 0 1 2.1 9.9" fill="none" stroke="#fff" stroke-width="1"/><path d="M9.2 2.8 A4.5 4.5 0 0 1 2.8 9.2" fill="none" stroke="#d4d0c8" stroke-width="1"/></svg>
<div class="a r" style="left:1242px;top:447px;width:59px;height:18px;"></div>
<div id="t55" class="t" style="left:1245.5px;top:450px;font-size:11px;line-height:11px;color:#000;letter-spacing:-0.147px;">Autosave</div>
<div id="t56" class="t" style="left:1240.2px;top:474px;font-size:11px;line-height:11px;color:#000;letter-spacing:-0.232px;">Options</div>
<div class="a r" style="left:1283px;top:470px;width:18px;height:20px;"></div>
<svg class="a" style="left:1288px;top:474px" width="8" height="12" viewBox="0 0 8 12"><path d="M0 0 L8 6 L0 12 Z" fill="#000"/></svg>
<div class="a r" style="left:1241px;top:496px;width:62px;height:22px;"></div>
<div id="t57" class="t" style="left:1252.7px;top:501px;font-size:11px;line-height:11px;color:#000;letter-spacing:-0.234px;">Less &lt;&lt;</div>
<div class="a " style="left:884px;top:529px;width:143px;height:135px;border:1px solid #404040;box-shadow:1px 1px #fff"></div>
<svg class="a" style="left:884px;top:529px" width="143" height="135" viewBox="0 0 143 135"><path d="M53.0 98.0 L54.0 97.7 L54.9 97.7 L55.9 97.9 L56.9 98.2 L57.8 98.3 L58.8 98.3 L59.8 98.0 L60.7 97.7 L61.7 97.7 L62.7 97.9 L63.6 98.2 L64.6 98.3 L65.6 98.3 L66.5 98.0 L67.5 97.7 L68.5 97.7 L69.4 97.9 L70.4 98.2 L71.4 98.3 L72.3 98.2 L73.3 97.9 L74.3 97.7 L75.2 97.6 L76.2 97.8 L77.2 98.1 L78.1 98.2 L79.1 98.0 L80.1 97.7 L81.0 97.4 L82.0 97.3 L83.0 97.6 L83.9 97.9 L84.9 98.1 L85.9 98.0 L86.8 97.8 L87.8 97.6 L88.8 97.6 L89.7 97.9 L90.7 98.2 L91.7 98.3 L92.6 98.2 L93.6 97.9 L94.6 97.7 L95.5 97.7 L96.5 97.9 L97.5 98.2 L98.4 98.3 L99.4 98.2 L100.4 97.9 L101.3 97.7 L102.3 97.7 L103.3 97.9 L104.2 98.2 L105.2 98.3 L106.2 98.2 L107.1 97.9 L108.1 97.7 L109.1 97.7 L110.0 97.9 L111.0 98.2 Z" fill="#d4d0c8" stroke="none"/><path d="M53.0 98.0 L54.0 97.7 L54.9 97.7 L55.9 97.9 L56.9 98.2 L57.8 98.3 L58.8 98.3 L59.8 98.0 L60.7 97.7 L61.7 97.7 L62.7 97.9 L63.6 98.2 L64.6 98.3 L65.6 98.3 L66.5 98.0 L67.5 97.7 L68.5 97.7 L69.4 97.9 L70.4 98.2 L71.4 98.3 L72.3 98.2 L73.3 97.9 L74.3 97.7 L75.2 97.6 L76.2 97.8 L77.2 98.1 L78.1 98.2 L79.1 98.0 L80.1 97.7 L81.0 97.4 L82.0 97.3 L83.0 97.6 L83.9 97.9 L84.9 98.1 L85.9 98.0 L86.8 97.8 L87.8 97.6 L88.8 97.6 L89.7 97.9 L90.7 98.2 L91.7 98.3 L92.6 98.2 L93.6 97.9 L94.6 97.7 L95.5 97.7 L96.5 97.9 L97.5 98.2 L98.4 98.3 L99.4 98.2 L100.4 97.9 L101.3 97.7 L102.3 97.7 L103.3 97.9 L104.2 98.2 L105.2 98.3 L106.2 98.2 L107.1 97.9 L108.1 97.7 L109.1 97.7 L110.0 97.9 L111.0 98.2" fill="none" stroke="#000" stroke-width="2.05" stroke-linejoin="round"/><path d="M50.7 100.8 L51.6 100.8 L52.6 100.6 L53.6 100.3 L54.5 100.2 L55.5 100.3 L56.5 100.6 L57.5 100.8 L58.4 100.8 L59.4 100.6 L60.4 100.3 L61.3 100.2 L62.3 100.3 L63.3 100.6 L64.3 100.8 L65.2 100.8 L66.2 100.6 L67.2 100.3 L68.1 100.1 L69.1 100.3 L70.1 100.5 L71.1 100.7 L72.0 100.6 L73.0 100.2 L74.0 99.7 L74.9 99.3 L75.9 99.1 L76.9 99.1 L77.8 99.1 L78.8 98.9 L79.8 98.5 L80.8 98.3 L81.7 98.4 L82.7 98.8 L83.7 99.4 L84.6 100.0 L85.6 100.2 L86.6 100.2 L87.6 100.0 L88.5 100.0 L89.5 100.2 L90.5 100.6 L91.4 100.8 L92.4 100.8 L93.4 100.5 L94.4 100.3 L95.3 100.2 L96.3 100.3 L97.3 100.6 L98.2 100.8 L99.2 100.8 L100.2 100.5 L101.1 100.3 L102.1 100.2 L103.1 100.3 L104.1 100.6 L105.0 100.8 L106.0 100.8 L107.0 100.5 L107.9 100.2 L108.9 100.2 Z" fill="#d4d0c8" stroke="none"/><path d="M50.7 100.8 L51.6 100.8 L52.6 100.6 L53.6 100.3 L54.5 100.2 L55.5 100.3 L56.5 100.6 L57.5 100.8 L58.4 100.8 L59.4 100.6 L60.4 100.3 L61.3 100.2 L62.3 100.3 L63.3 100.6 L64.3 100.8 L65.2 100.8 L66.2 100.6 L67.2 100.3 L68.1 100.1 L69.1 100.3 L70.1 100.5 L71.1 100.7 L72.0 100.6 L73.0 100.2 L74.0 99.7 L74.9 99.3 L75.9 99.1 L76.9 99.1 L77.8 99.1 L78.8 98.9 L79.8 98.5 L80.8 98.3 L81.7 98.4 L82.7 98.8 L83.7 99.4 L84.6 100.0 L85.6 100.2 L86.6 100.2 L87.6 100.0 L88.5 100.0 L89.5 100.2 L90.5 100.6 L91.4 100.8 L92.4 100.8 L93.4 100.5 L94.4 100.3 L95.3 100.2 L96.3 100.3 L97.3 100.6 L98.2 100.8 L99.2 100.8 L100.2 100.5 L101.1 100.3 L102.1 100.2 L103.1 100.3 L104.1 100.6 L105.0 100.8 L106.0 100.8 L107.0 100.5 L107.9 100.2 L108.9 100.2" fill="none" stroke="#000" stroke-width="2.05" stroke-linejoin="round"/><path d="M48.3 102.7 L49.3 103.0 L50.3 103.3 L51.3 103.3 L52.2 103.2 L53.2 102.9 L54.2 102.7 L55.2 102.7 L56.1 103.0 L57.1 103.3 L58.1 103.3 L59.1 103.2 L60.0 102.9 L61.0 102.7 L62.0 102.7 L63.0 103.0 L63.9 103.3 L64.9 103.3 L65.9 103.1 L66.9 102.7 L67.8 102.4 L68.8 102.2 L69.8 102.0 L70.8 101.7 L71.7 100.8 L72.7 99.5 L73.7 97.9 L74.7 96.3 L75.6 95.2 L76.6 94.6 L77.6 94.6 L78.6 95.0 L79.5 95.6 L80.5 96.5 L81.5 97.7 L82.5 99.1 L83.4 100.5 L84.4 101.7 L85.4 102.4 L86.4 102.6 L87.3 102.6 L88.3 102.5 L89.3 102.7 L90.3 103.0 L91.2 103.3 L92.2 103.3 L93.2 103.1 L94.2 102.8 L95.1 102.7 L96.1 102.7 L97.1 103.0 L98.1 103.3 L99.0 103.3 L100.0 103.1 L101.0 102.8 L102.0 102.7 L102.9 102.7 L103.9 103.0 L104.9 103.3 L105.9 103.3 L106.8 103.1 Z" fill="#d4d0c8" stroke="none"/><path d="M48.3 102.7 L49.3 103.0 L50.3 103.3 L51.3 103.3 L52.2 103.2 L53.2 102.9 L54.2 102.7 L55.2 102.7 L56.1 103.0 L57.1 103.3 L58.1 103.3 L59.1 103.2 L60.0 102.9 L61.0 102.7 L62.0 102.7 L63.0 103.0 L63.9 103.3 L64.9 103.3 L65.9 103.1 L66.9 102.7 L67.8 102.4 L68.8 102.2 L69.8 102.0 L70.8 101.7 L71.7 100.8 L72.7 99.5 L73.7 97.9 L74.7 96.3 L75.6 95.2 L76.6 94.6 L77.6 94.6 L78.6 95.0 L79.5 95.6 L80.5 96.5 L81.5 97.7 L82.5 99.1 L83.4 100.5 L84.4 101.7 L85.4 102.4 L86.4 102.6 L87.3 102.6 L88.3 102.5 L89.3 102.7 L90.3 103.0 L91.2 103.3 L92.2 103.3 L93.2 103.1 L94.2 102.8 L95.1 102.7 L96.1 102.7 L97.1 103.0 L98.1 103.3 L99.0 103.3 L100.0 103.1 L101.0 102.8 L102.0 102.7 L102.9 102.7 L103.9 103.0 L104.9 103.3 L105.9 103.3 L106.8 103.1" fill="none" stroke="#000" stroke-width="2.05" stroke-linejoin="round"/><path d="M46.0 105.5 L47.0 105.2 L48.0 105.2 L48.9 105.4 L49.9 105.7 L50.9 105.8 L51.9 105.8 L52.9 105.5 L53.8 105.2 L54.8 105.2 L55.8 105.4 L56.8 105.7 L57.8 105.8 L58.7 105.8 L59.7 105.5 L60.7 105.2 L61.7 105.1 L62.6 105.3 L63.6 105.5 L64.6 105.4 L65.6 104.9 L66.6 103.8 L67.5 102.3 L68.5 100.3 L69.5 97.8 L70.5 94.6 L71.5 90.7 L72.4 86.5 L73.4 82.6 L74.4 79.9 L75.4 78.9 L76.4 80.0 L77.3 82.8 L78.3 86.6 L79.3 90.6 L80.3 94.3 L81.2 97.6 L82.2 100.3 L83.2 102.5 L84.2 104.1 L85.2 105.0 L86.1 105.3 L87.1 105.3 L88.1 105.1 L89.1 105.1 L90.1 105.4 L91.0 105.7 L92.0 105.8 L93.0 105.7 L94.0 105.4 L95.0 105.2 L95.9 105.2 L96.9 105.4 L97.9 105.7 L98.9 105.8 L99.9 105.7 L100.8 105.4 L101.8 105.2 L102.8 105.2 L103.8 105.4 L104.8 105.7 Z" fill="#d4d0c8" stroke="none"/><path d="M46.0 105.5 L47.0 105.2 L48.0 105.2 L48.9 105.4 L49.9 105.7 L50.9 105.8 L51.9 105.8 L52.9 105.5 L53.8 105.2 L54.8 105.2 L55.8 105.4 L56.8 105.7 L57.8 105.8 L58.7 105.8 L59.7 105.5 L60.7 105.2 L61.7 105.1 L62.6 105.3 L63.6 105.5 L64.6 105.4 L65.6 104.9 L66.6 103.8 L67.5 102.3 L68.5 100.3 L69.5 97.8 L70.5 94.6 L71.5 90.7 L72.4 86.5 L73.4 82.6 L74.4 79.9 L75.4 78.9 L76.4 80.0 L77.3 82.8 L78.3 86.6 L79.3 90.6 L80.3 94.3 L81.2 97.6 L82.2 100.3 L83.2 102.5 L84.2 104.1 L85.2 105.0 L86.1 105.3 L87.1 105.3 L88.1 105.1 L89.1 105.1 L90.1 105.4 L91.0 105.7 L92.0 105.8 L93.0 105.7 L94.0 105.4 L95.0 105.2 L95.9 105.2 L96.9 105.4 L97.9 105.7 L98.9 105.8 L99.9 105.7 L100.8 105.4 L101.8 105.2 L102.8 105.2 L103.8 105.4 L104.8 105.7" fill="none" stroke="#000" stroke-width="2.05" stroke-linejoin="round"/><path d="M43.7 108.3 L44.6 108.3 L45.6 108.1 L46.6 107.8 L47.6 107.7 L48.6 107.8 L49.6 108.1 L50.5 108.3 L51.5 108.3 L52.5 108.1 L53.5 107.8 L54.5 107.6 L55.5 107.8 L56.4 108.1 L57.4 108.3 L58.4 108.3 L59.4 108.0 L60.4 107.6 L61.4 107.2 L62.3 106.9 L63.3 106.3 L64.3 104.8 L65.3 102.0 L66.3 97.6 L67.3 91.4 L68.2 83.8 L69.2 75.3 L70.2 66.7 L71.2 59.2 L72.2 53.9 L73.2 51.8 L74.2 53.4 L75.1 58.6 L76.1 66.4 L77.1 75.6 L78.1 84.4 L79.1 91.9 L80.0 97.6 L81.0 101.5 L82.0 104.1 L83.0 106.0 L84.0 107.2 L85.0 107.9 L85.9 108.1 L86.9 108.0 L87.9 107.7 L88.9 107.6 L89.9 107.8 L90.9 108.1 L91.8 108.3 L92.8 108.3 L93.8 108.0 L94.8 107.8 L95.8 107.7 L96.8 107.8 L97.7 108.1 L98.7 108.3 L99.7 108.3 L100.7 108.0 L101.7 107.8 L102.7 107.7 Z" fill="#d4d0c8" stroke="none"/><path d="M43.7 108.3 L44.6 108.3 L45.6 108.1 L46.6 107.8 L47.6 107.7 L48.6 107.8 L49.6 108.1 L50.5 108.3 L51.5 108.3 L52.5 108.1 L53.5 107.8 L54.5 107.6 L55.5 107.8 L56.4 108.1 L57.4 108.3 L58.4 108.3 L59.4 108.0 L60.4 107.6 L61.4 107.2 L62.3 106.9 L63.3 106.3 L64.3 104.8 L65.3 102.0 L66.3 97.6 L67.3 91.4 L68.2 83.8 L69.2 75.3 L70.2 66.7 L71.2 59.2 L72.2 53.9 L73.2 51.8 L74.2 53.4 L75.1 58.6 L76.1 66.4 L77.1 75.6 L78.1 84.4 L79.1 91.9 L80.0 97.6 L81.0 101.5 L82.0 104.1 L83.0 106.0 L84.0 107.2 L85.0 107.9 L85.9 108.1 L86.9 108.0 L87.9 107.7 L88.9 107.6 L89.9 107.8 L90.9 108.1 L91.8 108.3 L92.8 108.3 L93.8 108.0 L94.8 107.8 L95.8 107.7 L96.8 107.8 L97.7 108.1 L98.7 108.3 L99.7 108.3 L100.7 108.0 L101.7 107.8 L102.7 107.7" fill="none" stroke="#000" stroke-width="2.05" stroke-linejoin="round"/><path d="M41.3 110.2 L42.3 110.5 L43.3 110.7 L44.3 110.8 L45.3 110.7 L46.3 110.4 L47.3 110.2 L48.2 110.2 L49.2 110.5 L50.2 110.8 L51.2 110.8 L52.2 110.7 L53.2 110.4 L54.2 110.2 L55.2 110.2 L56.1 110.4 L57.1 110.7 L58.1 110.6 L59.1 110.1 L60.1 109.0 L61.1 107.4 L62.1 104.9 L63.1 101.0 L64.0 94.8 L65.0 86.0 L66.0 74.4 L67.0 61.0 L68.0 47.4 L69.0 35.8 L70.0 27.9 L71.0 25.3 L71.9 28.3 L72.9 36.2 L73.9 47.6 L74.9 60.8 L75.9 74.0 L76.9 85.6 L77.9 94.9 L78.9 101.3 L79.8 105.3 L80.8 107.6 L81.8 108.8 L82.8 109.6 L83.8 110.2 L84.8 110.7 L85.8 110.8 L86.8 110.6 L87.7 110.3 L88.7 110.2 L89.7 110.2 L90.7 110.5 L91.7 110.8 L92.7 110.8 L93.7 110.6 L94.7 110.3 L95.6 110.2 L96.6 110.2 L97.6 110.5 L98.6 110.8 L99.6 110.8 L100.6 110.6 Z" fill="#d4d0c8" stroke="none"/><path d="M41.3 110.2 L42.3 110.5 L43.3 110.7 L44.3 110.8 L45.3 110.7 L46.3 110.4 L47.3 110.2 L48.2 110.2 L49.2 110.5 L50.2 110.8 L51.2 110.8 L52.2 110.7 L53.2 110.4 L54.2 110.2 L55.2 110.2 L56.1 110.4 L57.1 110.7 L58.1 110.6 L59.1 110.1 L60.1 109.0 L61.1 107.4 L62.1 104.9 L63.1 101.0 L64.0 94.8 L65.0 86.0 L66.0 74.4 L67.0 61.0 L68.0 47.4 L69.0 35.8 L70.0 27.9 L71.0 25.3 L71.9 28.3 L72.9 36.2 L73.9 47.6 L74.9 60.8 L75.9 74.0 L76.9 85.6 L77.9 94.9 L78.9 101.3 L79.8 105.3 L80.8 107.6 L81.8 108.8 L82.8 109.6 L83.8 110.2 L84.8 110.7 L85.8 110.8 L86.8 110.6 L87.7 110.3 L88.7 110.2 L89.7 110.2 L90.7 110.5 L91.7 110.8 L92.7 110.8 L93.7 110.6 L94.7 110.3 L95.6 110.2 L96.6 110.2 L97.6 110.5 L98.6 110.8 L99.6 110.8 L100.6 110.6" fill="none" stroke="#000" stroke-width="2.05" stroke-linejoin="round"/><path d="M39.0 113.0 L40.0 112.7 L41.0 112.7 L42.0 112.9 L43.0 113.2 L44.0 113.3 L45.0 113.3 L45.9 113.0 L46.9 112.7 L47.9 112.7 L48.9 112.9 L49.9 113.2 L50.9 113.3 L51.9 113.3 L52.9 113.0 L53.9 112.7 L54.9 112.6 L55.9 112.6 L56.8 112.5 L57.8 111.9 L58.8 110.3 L59.8 107.3 L60.8 102.5 L61.8 95.6 L62.8 86.2 L63.8 74.3 L64.8 60.5 L65.8 46.0 L66.8 33.1 L67.8 24.2 L68.8 21.1 L69.7 24.4 L70.7 33.4 L71.7 46.1 L72.7 60.4 L73.7 74.1 L74.7 86.1 L75.7 95.6 L76.7 102.7 L77.7 107.5 L78.7 110.4 L79.7 111.8 L80.7 112.3 L81.6 112.4 L82.6 112.6 L83.6 112.9 L84.6 113.2 L85.6 113.3 L86.6 113.2 L87.6 112.9 L88.6 112.7 L89.6 112.7 L90.6 112.9 L91.6 113.2 L92.6 113.3 L93.5 113.2 L94.5 112.9 L95.5 112.7 L96.5 112.7 L97.5 112.9 L98.5 113.2 Z" fill="#d4d0c8" stroke="none"/><path d="M39.0 113.0 L40.0 112.7 L41.0 112.7 L42.0 112.9 L43.0 113.2 L44.0 113.3 L45.0 113.3 L45.9 113.0 L46.9 112.7 L47.9 112.7 L48.9 112.9 L49.9 113.2 L50.9 113.3 L51.9 113.3 L52.9 113.0 L53.9 112.7 L54.9 112.6 L55.9 112.6 L56.8 112.5 L57.8 111.9 L58.8 110.3 L59.8 107.3 L60.8 102.5 L61.8 95.6 L62.8 86.2 L63.8 74.3 L64.8 60.5 L65.8 46.0 L66.8 33.1 L67.8 24.2 L68.8 21.1 L69.7 24.4 L70.7 33.4 L71.7 46.1 L72.7 60.4 L73.7 74.1 L74.7 86.1 L75.7 95.6 L76.7 102.7 L77.7 107.5 L78.7 110.4 L79.7 111.8 L80.7 112.3 L81.6 112.4 L82.6 112.6 L83.6 112.9 L84.6 113.2 L85.6 113.3 L86.6 113.2 L87.6 112.9 L88.6 112.7 L89.6 112.7 L90.6 112.9 L91.6 113.2 L92.6 113.3 L93.5 113.2 L94.5 112.9 L95.5 112.7 L96.5 112.7 L97.5 112.9 L98.5 113.2" fill="none" stroke="#000" stroke-width="2.05" stroke-linejoin="round"/><path d="M36.7 115.8 L37.7 115.8 L38.7 115.6 L39.7 115.3 L40.7 115.2 L41.6 115.3 L42.6 115.6 L43.6 115.8 L44.6 115.8 L45.6 115.6 L46.6 115.3 L47.6 115.1 L48.6 115.3 L49.6 115.6 L50.6 115.8 L51.6 115.8 L52.6 115.5 L53.6 115.1 L54.6 114.7 L55.6 114.2 L56.6 113.3 L57.6 111.5 L58.6 108.1 L59.6 102.7 L60.6 95.1 L61.6 85.7 L62.6 75.2 L63.6 64.6 L64.6 55.4 L65.5 48.8 L66.5 46.2 L67.5 48.3 L68.5 54.7 L69.5 64.4 L70.5 75.5 L71.5 86.4 L72.5 95.6 L73.5 102.6 L74.5 107.5 L75.5 110.8 L76.5 113.0 L77.5 114.5 L78.5 115.3 L79.5 115.6 L80.5 115.5 L81.5 115.2 L82.5 115.1 L83.5 115.3 L84.5 115.6 L85.5 115.8 L86.5 115.8 L87.5 115.6 L88.5 115.3 L89.4 115.2 L90.4 115.3 L91.4 115.6 L92.4 115.8 L93.4 115.8 L94.4 115.5 L95.4 115.3 L96.4 115.2 Z" fill="#d4d0c8" stroke="none"/><path d="M36.7 115.8 L37.7 115.8 L38.7 115.6 L39.7 115.3 L40.7 115.2 L41.6 115.3 L42.6 115.6 L43.6 115.8 L44.6 115.8 L45.6 115.6 L46.6 115.3 L47.6 115.1 L48.6 115.3 L49.6 115.6 L50.6 115.8 L51.6 115.8 L52.6 115.5 L53.6 115.1 L54.6 114.7 L55.6 114.2 L56.6 113.3 L57.6 111.5 L58.6 108.1 L59.6 102.7 L60.6 95.1 L61.6 85.7 L62.6 75.2 L63.6 64.6 L64.6 55.4 L65.5 48.8 L66.5 46.2 L67.5 48.3 L68.5 54.7 L69.5 64.4 L70.5 75.5 L71.5 86.4 L72.5 95.6 L73.5 102.6 L74.5 107.5 L75.5 110.8 L76.5 113.0 L77.5 114.5 L78.5 115.3 L79.5 115.6 L80.5 115.5 L81.5 115.2 L82.5 115.1 L83.5 115.3 L84.5 115.6 L85.5 115.8 L86.5 115.8 L87.5 115.6 L88.5 115.3 L89.4 115.2 L90.4 115.3 L91.4 115.6 L92.4 115.8 L93.4 115.8 L94.4 115.5 L95.4 115.3 L96.4 115.2" fill="none" stroke="#000" stroke-width="2.05" stroke-linejoin="round"/><path d="M34.3 117.7 L35.3 118.0 L36.3 118.2 L37.3 118.3 L38.3 118.2 L39.3 117.9 L40.3 117.7 L41.3 117.7 L42.3 118.0 L43.3 118.2 L44.3 118.3 L45.3 118.2 L46.3 117.9 L47.3 117.7 L48.3 117.7 L49.3 118.0 L50.3 118.2 L51.3 118.2 L52.3 117.9 L53.3 117.3 L54.3 116.5 L55.3 115.4 L56.3 113.8 L57.3 111.3 L58.3 107.5 L59.3 102.4 L60.3 96.4 L61.3 90.4 L62.3 85.4 L63.3 82.1 L64.3 81.1 L65.3 82.5 L66.3 85.8 L67.3 90.6 L68.3 96.2 L69.3 102.0 L70.3 107.2 L71.3 111.3 L72.3 114.2 L73.3 115.9 L74.3 116.7 L75.3 117.1 L76.3 117.5 L77.3 117.9 L78.3 118.2 L79.3 118.3 L80.3 118.2 L81.3 117.9 L82.3 117.7 L83.3 117.7 L84.3 118.0 L85.3 118.3 L86.3 118.3 L87.3 118.2 L88.3 117.8 L89.3 117.7 L90.3 117.7 L91.3 118.0 L92.3 118.3 L93.3 118.3 L94.3 118.1 Z" fill="#d4d0c8" stroke="none"/><path d="M34.3 117.7 L35.3 118.0 L36.3 118.2 L37.3 118.3 L38.3 118.2 L39.3 117.9 L40.3 117.7 L41.3 117.7 L42.3 118.0 L43.3 118.2 L44.3 118.3 L45.3 118.2 L46.3 117.9 L47.3 117.7 L48.3 117.7 L49.3 118.0 L50.3 118.2 L51.3 118.2 L52.3 117.9 L53.3 117.3 L54.3 116.5 L55.3 115.4 L56.3 113.8 L57.3 111.3 L58.3 107.5 L59.3 102.4 L60.3 96.4 L61.3 90.4 L62.3 85.4 L63.3 82.1 L64.3 81.1 L65.3 82.5 L66.3 85.8 L67.3 90.6 L68.3 96.2 L69.3 102.0 L70.3 107.2 L71.3 111.3 L72.3 114.2 L73.3 115.9 L74.3 116.7 L75.3 117.1 L76.3 117.5 L77.3 117.9 L78.3 118.2 L79.3 118.3 L80.3 118.2 L81.3 117.9 L82.3 117.7 L83.3 117.7 L84.3 118.0 L85.3 118.3 L86.3 118.3 L87.3 118.2 L88.3 117.8 L89.3 117.7 L90.3 117.7 L91.3 118.0 L92.3 118.3 L93.3 118.3 L94.3 118.1" fill="none" stroke="#000" stroke-width="2.05" stroke-linejoin="round"/><path d="M32.0 120.5 L33.0 120.2 L34.0 120.2 L35.0 120.4 L36.0 120.7 L37.0 120.8 L38.0 120.8 L39.0 120.5 L40.0 120.2 L41.0 120.2 L42.0 120.4 L43.0 120.7 L44.0 120.8 L45.1 120.8 L46.1 120.5 L47.1 120.2 L48.1 120.1 L49.1 120.3 L50.1 120.6 L51.1 120.6 L52.1 120.3 L53.1 119.6 L54.1 118.6 L55.1 117.5 L56.1 116.3 L57.1 114.7 L58.1 112.7 L59.1 110.4 L60.1 108.2 L61.1 106.6 L62.1 106.1 L63.1 106.8 L64.1 108.4 L65.1 110.5 L66.1 112.6 L67.1 114.5 L68.2 116.1 L69.2 117.6 L70.2 118.8 L71.2 119.8 L72.2 120.4 L73.2 120.5 L74.2 120.4 L75.2 120.2 L76.2 120.2 L77.2 120.4 L78.2 120.7 L79.2 120.8 L80.2 120.7 L81.2 120.5 L82.2 120.2 L83.2 120.2 L84.2 120.4 L85.2 120.7 L86.2 120.8 L87.2 120.7 L88.2 120.4 L89.2 120.2 L90.2 120.2 L91.2 120.4 L92.2 120.7 Z" fill="#d4d0c8" stroke="none"/><path d="M32.0 120.5 L33.0 120.2 L34.0 120.2 L35.0 120.4 L36.0 120.7 L37.0 120.8 L38.0 120.8 L39.0 120.5 L40.0 120.2 L41.0 120.2 L42.0 120.4 L43.0 120.7 L44.0 120.8 L45.1 120.8 L46.1 120.5 L47.1 120.2 L48.1 120.1 L49.1 120.3 L50.1 120.6 L51.1 120.6 L52.1 120.3 L53.1 119.6 L54.1 118.6 L55.1 117.5 L56.1 116.3 L57.1 114.7 L58.1 112.7 L59.1 110.4 L60.1 108.2 L61.1 106.6 L62.1 106.1 L63.1 106.8 L64.1 108.4 L65.1 110.5 L66.1 112.6 L67.1 114.5 L68.2 116.1 L69.2 117.6 L70.2 118.8 L71.2 119.8 L72.2 120.4 L73.2 120.5 L74.2 120.4 L75.2 120.2 L76.2 120.2 L77.2 120.4 L78.2 120.7 L79.2 120.8 L80.2 120.7 L81.2 120.5 L82.2 120.2 L83.2 120.2 L84.2 120.4 L85.2 120.7 L86.2 120.8 L87.2 120.7 L88.2 120.4 L89.2 120.2 L90.2 120.2 L91.2 120.4 L92.2 120.7" fill="none" stroke="#000" stroke-width="2.05" stroke-linejoin="round"/><path d="M29.7 123.3 L30.7 123.3 L31.7 123.1 L32.7 122.8 L33.7 122.7 L34.7 122.8 L35.7 123.1 L36.7 123.3 L37.7 123.3 L38.7 123.1 L39.8 122.8 L40.8 122.7 L41.8 122.8 L42.8 123.1 L43.8 123.3 L44.8 123.3 L45.8 123.1 L46.8 122.8 L47.8 122.6 L48.8 122.7 L49.8 123.0 L50.8 123.1 L51.8 122.9 L52.9 122.4 L53.9 121.7 L54.9 121.1 L55.9 120.6 L56.9 120.3 L57.9 120.0 L58.9 119.7 L59.9 119.3 L60.9 119.2 L61.9 119.4 L62.9 120.0 L64.0 120.9 L65.0 121.7 L66.0 122.2 L67.0 122.4 L68.0 122.4 L69.0 122.4 L70.0 122.7 L71.0 123.0 L72.0 123.3 L73.0 123.3 L74.0 123.1 L75.0 122.8 L76.1 122.6 L77.1 122.8 L78.1 123.1 L79.1 123.3 L80.1 123.3 L81.1 123.1 L82.1 122.8 L83.1 122.7 L84.1 122.8 L85.1 123.1 L86.1 123.3 L87.1 123.3 L88.2 123.1 L89.2 122.8 L90.2 122.7 Z" fill="#d4d0c8" stroke="none"/><path d="M29.7 123.3 L30.7 123.3 L31.7 123.1 L32.7 122.8 L33.7 122.7 L34.7 122.8 L35.7 123.1 L36.7 123.3 L37.7 123.3 L38.7 123.1 L39.8 122.8 L40.8 122.7 L41.8 122.8 L42.8 123.1 L43.8 123.3 L44.8 123.3 L45.8 123.1 L46.8 122.8 L47.8 122.6 L48.8 122.7 L49.8 123.0 L50.8 123.1 L51.8 122.9 L52.9 122.4 L53.9 121.7 L54.9 121.1 L55.9 120.6 L56.9 120.3 L57.9 120.0 L58.9 119.7 L59.9 119.3 L60.9 119.2 L61.9 119.4 L62.9 120.0 L64.0 120.9 L65.0 121.7 L66.0 122.2 L67.0 122.4 L68.0 122.4 L69.0 122.4 L70.0 122.7 L71.0 123.0 L72.0 123.3 L73.0 123.3 L74.0 123.1 L75.0 122.8 L76.1 122.6 L77.1 122.8 L78.1 123.1 L79.1 123.3 L80.1 123.3 L81.1 123.1 L82.1 122.8 L83.1 122.7 L84.1 122.8 L85.1 123.1 L86.1 123.3 L87.1 123.3 L88.2 123.1 L89.2 122.8 L90.2 122.7" fill="none" stroke="#000" stroke-width="2.05" stroke-linejoin="round"/><path d="M27.3 125.2 L28.3 125.5 L29.4 125.7 L30.4 125.8 L31.4 125.7 L32.4 125.4 L33.4 125.2 L34.4 125.2 L35.4 125.5 L36.4 125.7 L37.5 125.8 L38.5 125.7 L39.5 125.4 L40.5 125.2 L41.5 125.2 L42.5 125.5 L43.5 125.7 L44.5 125.8 L45.6 125.7 L46.6 125.4 L47.6 125.1 L48.6 125.2 L49.6 125.4 L50.6 125.6 L51.6 125.6 L52.6 125.4 L53.7 125.0 L54.7 124.6 L55.7 124.6 L56.7 124.8 L57.7 125.0 L58.7 125.2 L59.7 125.1 L60.7 124.8 L61.8 124.8 L62.8 124.9 L63.8 125.3 L64.8 125.6 L65.8 125.8 L66.8 125.6 L67.8 125.3 L68.8 125.2 L69.9 125.2 L70.9 125.5 L71.9 125.8 L72.9 125.8 L73.9 125.7 L74.9 125.4 L75.9 125.2 L76.9 125.2 L78.0 125.5 L79.0 125.8 L80.0 125.8 L81.0 125.7 L82.0 125.4 L83.0 125.2 L84.0 125.2 L85.0 125.5 L86.1 125.8 L87.1 125.8 L88.1 125.7 Z" fill="#d4d0c8" stroke="none"/><path d="M27.3 125.2 L28.3 125.5 L29.4 125.7 L30.4 125.8 L31.4 125.7 L32.4 125.4 L33.4 125.2 L34.4 125.2 L35.4 125.5 L36.4 125.7 L37.5 125.8 L38.5 125.7 L39.5 125.4 L40.5 125.2 L41.5 125.2 L42.5 125.5 L43.5 125.7 L44.5 125.8 L45.6 125.7 L46.6 125.4 L47.6 125.1 L48.6 125.2 L49.6 125.4 L50.6 125.6 L51.6 125.6 L52.6 125.4 L53.7 125.0 L54.7 124.6 L55.7 124.6 L56.7 124.8 L57.7 125.0 L58.7 125.2 L59.7 125.1 L60.7 124.8 L61.8 124.8 L62.8 124.9 L63.8 125.3 L64.8 125.6 L65.8 125.8 L66.8 125.6 L67.8 125.3 L68.8 125.2 L69.9 125.2 L70.9 125.5 L71.9 125.8 L72.9 125.8 L73.9 125.7 L74.9 125.4 L75.9 125.2 L76.9 125.2 L78.0 125.5 L79.0 125.8 L80.0 125.8 L81.0 125.7 L82.0 125.4 L83.0 125.2 L84.0 125.2 L85.0 125.5 L86.1 125.8 L87.1 125.8 L88.1 125.7" fill="none" stroke="#000" stroke-width="2.05" stroke-linejoin="round"/><path d="M25.0 128.0 L26.0 127.7 L27.0 127.7 L28.1 127.9 L29.1 128.2 L30.1 128.3 L31.1 128.3 L32.1 128.0 L33.1 127.7 L34.1 127.7 L35.2 127.9 L36.2 128.2 L37.2 128.3 L38.2 128.3 L39.2 128.0 L40.2 127.7 L41.3 127.7 L42.3 127.9 L43.3 128.2 L44.3 128.3 L45.3 128.3 L46.3 128.0 L47.4 127.7 L48.4 127.6 L49.4 127.8 L50.4 128.1 L51.4 128.3 L52.5 128.2 L53.5 127.9 L54.5 127.6 L55.5 127.6 L56.5 127.8 L57.5 128.1 L58.6 128.3 L59.6 128.2 L60.6 127.9 L61.6 127.7 L62.6 127.6 L63.6 127.9 L64.7 128.2 L65.7 128.3 L66.7 128.2 L67.7 128.0 L68.7 127.7 L69.7 127.7 L70.8 127.9 L71.8 128.2 L72.8 128.3 L73.8 128.2 L74.8 128.0 L75.8 127.7 L76.8 127.7 L77.9 127.9 L78.9 128.2 L79.9 128.3 L80.9 128.2 L81.9 128.0 L82.9 127.7 L84.0 127.7 L85.0 127.9 L86.0 128.2 Z" fill="#d4d0c8" stroke="none"/><path d="M25.0 128.0 L26.0 127.7 L27.0 127.7 L28.1 127.9 L29.1 128.2 L30.1 128.3 L31.1 128.3 L32.1 128.0 L33.1 127.7 L34.1 127.7 L35.2 127.9 L36.2 128.2 L37.2 128.3 L38.2 128.3 L39.2 128.0 L40.2 127.7 L41.3 127.7 L42.3 127.9 L43.3 128.2 L44.3 128.3 L45.3 128.3 L46.3 128.0 L47.4 127.7 L48.4 127.6 L49.4 127.8 L50.4 128.1 L51.4 128.3 L52.5 128.2 L53.5 127.9 L54.5 127.6 L55.5 127.6 L56.5 127.8 L57.5 128.1 L58.6 128.3 L59.6 128.2 L60.6 127.9 L61.6 127.7 L62.6 127.6 L63.6 127.9 L64.7 128.2 L65.7 128.3 L66.7 128.2 L67.7 128.0 L68.7 127.7 L69.7 127.7 L70.8 127.9 L71.8 128.2 L72.8 128.3 L73.8 128.2 L74.8 128.0 L75.8 127.7 L76.8 127.7 L77.9 127.9 L78.9 128.2 L79.9 128.3 L80.9 128.2 L81.9 128.0 L82.9 127.7 L84.0 127.7 L85.0 127.9 L86.0 128.2" fill="none" stroke="#000" stroke-width="2.05" stroke-linejoin="round"/></svg>
<div id="t58" class="t" style="left:991.5px;top:649px;font-size:12px;line-height:12px;color:#808080;font-weight:bold;letter-spacing:0.497px;">3D(1)</div>
<div class="a " style="left:1029px;top:529px;width:140px;height:137px;box-shadow:inset 1px 1px #404040,inset -1px -1px #fff,inset 2px 0 #808080"></div>
<div class="a " style="left:1167px;top:529px;width:139px;height:137px;box-shadow:inset 1px 1px #404040,inset 0 -1px #fff,inset 2px 0 #808080"></div>
<div id="t59" class="t" style="left:1031.2px;top:534px;font-size:11px;line-height:11px;color:#000;letter-spacing:-0.267px;">Camera 1 Statistics</div>
<div id="t60" class="t" style="left:1031.2px;top:547px;font-size:11px;line-height:11px;color:#000;letter-spacing:-0.375px;">Camera Idle</div>
<div id="t61" class="t" style="left:1031.2px;top:560px;font-size:11px;line-height:11px;color:#000;letter-spacing:-0.135px;">Max X = 59</div>
<div id="t62" class="t" style="left:1031.2px;top:573px;font-size:11px;line-height:11px;color:#000;letter-spacing:-0.206px;">Max Y = 61</div>
<div id="t63" class="t" style="left:1031.2px;top:586px;font-size:11px;line-height:11px;color:#000;letter-spacing:-0.177px;">Max Pixel = 18639</div>
<div id="t64" class="t" style="left:1031.2px;top:599px;font-size:11px;line-height:11px;color:#000;letter-spacing:-0.014px;">FWHM = 4.87</div>
<div id="t65" class="t" style="left:1031.2px;top:612px;font-size:11px;line-height:11px;color:#000;letter-spacing:-0.141px;">Half Flux Dia. = 4.66</div>
<div id="t66" class="t" style="left:1031.2px;top:625px;font-size:11px;line-height:11px;color:#000;letter-spacing:-0.076px;">SNR = 857.61</div>
<div id="t67" class="t" style="left:1169.4px;top:534px;font-size:11px;line-height:11px;color:#000;letter-spacing:-0.295px;">Guider Information</div>
<div id="t68" class="t" style="left:1169.4px;top:547px;font-size:11px;line-height:11px;color:#000;letter-spacing:-0.375px;">Camera Idle</div>
<div id="t69" class="t" style="left:1169.4px;top:573px;font-size:11px;line-height:11px;color:#000;letter-spacing:-0.325px;">Cooler power 83%</div>
<div id="t70" class="t" style="left:1169.4px;top:586px;font-size:11px;line-height:11px;color:#000;letter-spacing:-0.144px;">Sensor Temp -20.0</div>
<div id="t71" class="t" style="left:1169.4px;top:599px;font-size:11px;line-height:11px;color:#000;letter-spacing:-0.151px;">Setpoint: -20.0</div>
</div>
</body></html>
